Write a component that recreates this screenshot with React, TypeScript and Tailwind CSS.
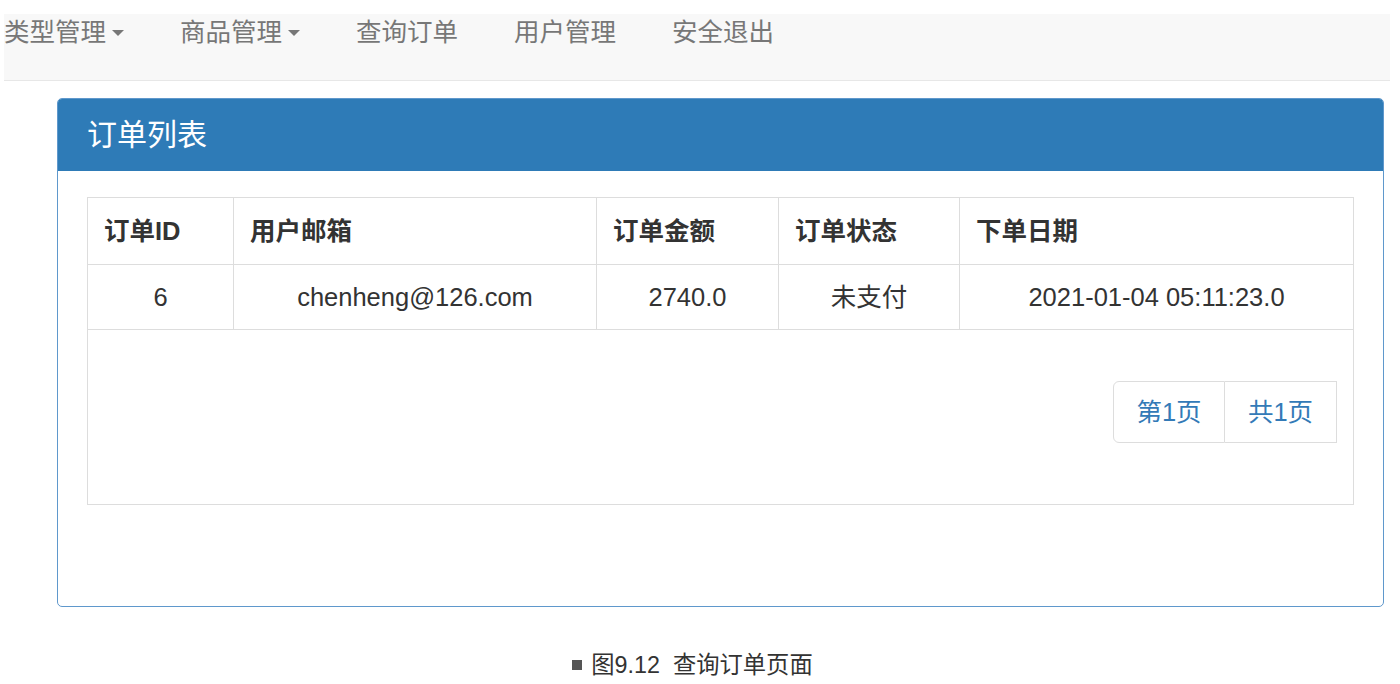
const navItems = [
  { label: '类型管理', caret: true },
  { label: '商品管理', caret: true },
  { label: '查询订单', caret: false },
  { label: '用户管理', caret: false },
  { label: '安全退出', caret: false },
];

const columns = [
  { title: '订单ID', width: 'w-[146px]' },
  { title: '用户邮箱', width: 'w-[363px]' },
  { title: '订单金额', width: 'w-[182px]' },
  { title: '订单状态', width: 'w-[181px]' },
  { title: '下单日期', width: 'w-[394px]' },
];

const orders = [
  { id: '6', email: 'chenheng@126.com', amount: '2740.0', status: '未支付', date: '2021-01-04 05:11:23.0' },
];

export default function App() {
  return (
    <div className="w-[1400px] h-[684px] bg-white overflow-hidden font-['Liberation_Sans','Noto_Sans_CJK_SC',sans-serif] text-[#333]">
      {/* Navbar */}
      <nav className="mt-[14px] ml-[4px] w-[1386px] h-[67px] bg-[#f8f8f8] border-b border-[#e7e7e7] flex items-start gap-[56px] pt-[5px]">
        {navItems.map((item) => (
          <div key={item.label} className="flex items-center text-[25.5px] leading-[26px] text-[#777]">
            <span>{item.label}</span>
            {item.caret && (
              <span className="ml-[6px] mt-[2px] w-0 h-0 border-l-[6px] border-r-[6px] border-t-[6px] border-l-transparent border-r-transparent border-t-[#777]" />
            )}
          </div>
        ))}
      </nav>

      {/* Panel */}
      <div className="mt-[17px] ml-[57px] w-[1327px] h-[509px] border border-[#5f98cc] rounded-[5px] overflow-hidden">
        <div className="h-[72px] bg-[#2e7bb7] flex items-center pl-[29px]">
          <h3 className="text-[30px] text-white leading-none">订单列表</h3>
        </div>
        <div className="pt-[26px] pl-[29px] pr-[30px]">
          <table className="w-[1266px] border-collapse border border-[#dddddd] table-fixed">
            <thead>
              <tr className="h-[67px]">
                {columns.map((c) => (
                  <th
                    key={c.title}
                    className={`${c.width} border border-[#dddddd] text-left pl-[16px] text-[25.5px] font-bold text-[#333]`}
                  >
                    {c.title}
                  </th>
                ))}
              </tr>
            </thead>
            <tbody>
              {orders.map((o) => (
                <tr key={o.id} className="h-[65px] text-[25.5px] text-center">
                  <td className="border border-[#dddddd]">{o.id}</td>
                  <td className="border border-[#dddddd]">{o.email}</td>
                  <td className="border border-[#dddddd]">{o.amount}</td>
                  <td className="border border-[#dddddd]">{o.status}</td>
                  <td className="border border-[#dddddd]">{o.date}</td>
                </tr>
              ))}
              <tr className="h-[175px]">
                <td colSpan={5} className="border border-[#dddddd] align-top">
                  <div className="flex justify-end pt-[51px] pr-[16px]">
                    <div className="flex h-[62px] text-[25.5px] text-[#337ab7]">
                      <span className="w-[112px] flex items-center justify-center border border-[#dddddd] rounded-l-[6px]">
                        第1页
                      </span>
                      <span className="w-[112px] flex items-center justify-center border border-l-0 border-[#dddddd]">
                        共1页
                      </span>
                    </div>
                  </div>
                </td>
              </tr>
            </tbody>
          </table>
        </div>
      </div>

      {/* Caption */}
      <div className="mt-[45px] flex items-center justify-center gap-[9px] pr-[15px] text-[23.3px] leading-[26px] text-[#333]">
        <span className="w-[10px] h-[10px] bg-[#555]" />
        <span className="whitespace-pre">图9.12  查询订单页面</span>
      </div>
    </div>
  );
}
